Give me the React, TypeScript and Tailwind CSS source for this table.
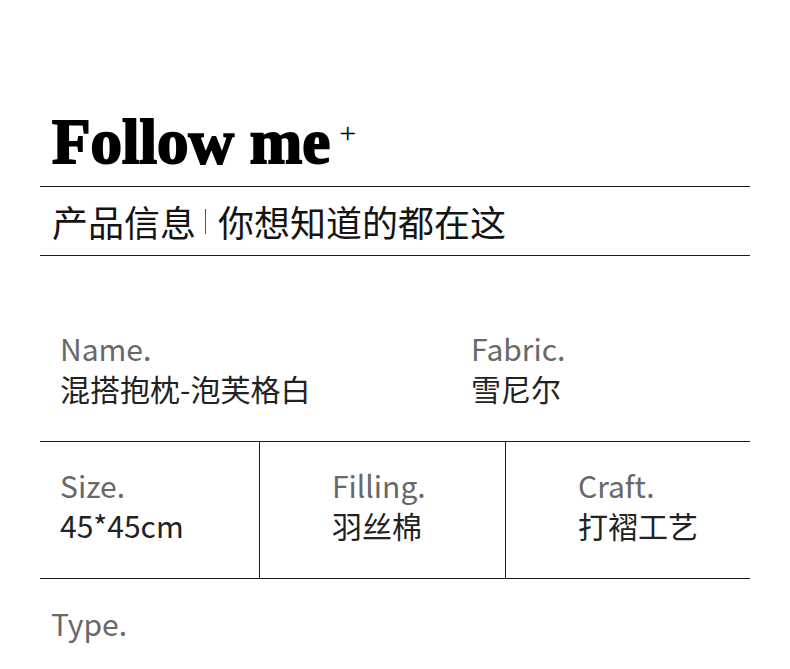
const cjk = { fontFamily: '"Noto Sans CJK SC", "Noto Sans", sans-serif' };

function Field({ label, value, className = '' }: { label: string; value: string; className?: string }) {
  return (
    <div className={`text-[30px] leading-[40px] ${className}`}>
      <p className="text-[#686868]">{label}</p>
      <p className="text-[#222222]">{value}</p>
    </div>
  );
}

export default function App() {
  return (
    <div className="h-[669px] w-[790px] overflow-hidden bg-white" style={cjk}>
      {/* Heading */}
      <div className="px-10 pt-[111px]">
        <h1
          className="flex items-start pl-3 text-[63px] font-bold leading-[62px] text-black [-webkit-text-stroke:2px_black]"
          style={{ fontFamily: '"Liberation Serif", "Times New Roman", serif' }}
        >
          Follow me
          <span className="ml-[9px] mt-[7px] text-[30px] font-normal leading-[30px] [-webkit-text-stroke:0px]">+</span>
        </h1>

        <div className="mt-[13px] flex h-[70px] items-center border-y border-[#1c1c1c] pl-3 text-[36px] text-[#141414]">
          <span>产品信息</span>
          <span className="ml-[9px] mr-[12px] inline-block h-[25px] w-px bg-[#555555]" />
          <span>你想知道的都在这</span>
        </div>
      </div>

      {/* Specs */}
      <div className="px-10">
        <div className="flex h-[186px] border-b border-[#1c1c1c] pt-[72px]">
          <Field label="Name." value="混搭抱枕-泡芙格白" className="w-[431px] pl-5" />
          <Field label="Fabric." value="雪尼尔" />
        </div>

        <div className="grid h-[137px] grid-cols-[219px_246px_1fr] border-b border-[#1c1c1c]">
          <Field label="Size." value="45*45cm" className="pl-5 pt-[23px]" />
          <Field label="Filling." value="羽丝棉" className="border-l border-[#1c1c1c] pl-[72px] pt-[23px]" />
          <Field label="Craft." value="打褶工艺" className="border-l border-[#1c1c1c] pl-[72px] pt-[23px]" />
        </div>

        <div className="pl-[11px] pt-[24px]">
          <p className="text-[30px] leading-[40px] text-[#686868]">Type.</p>
        </div>
      </div>
    </div>
  );
}
